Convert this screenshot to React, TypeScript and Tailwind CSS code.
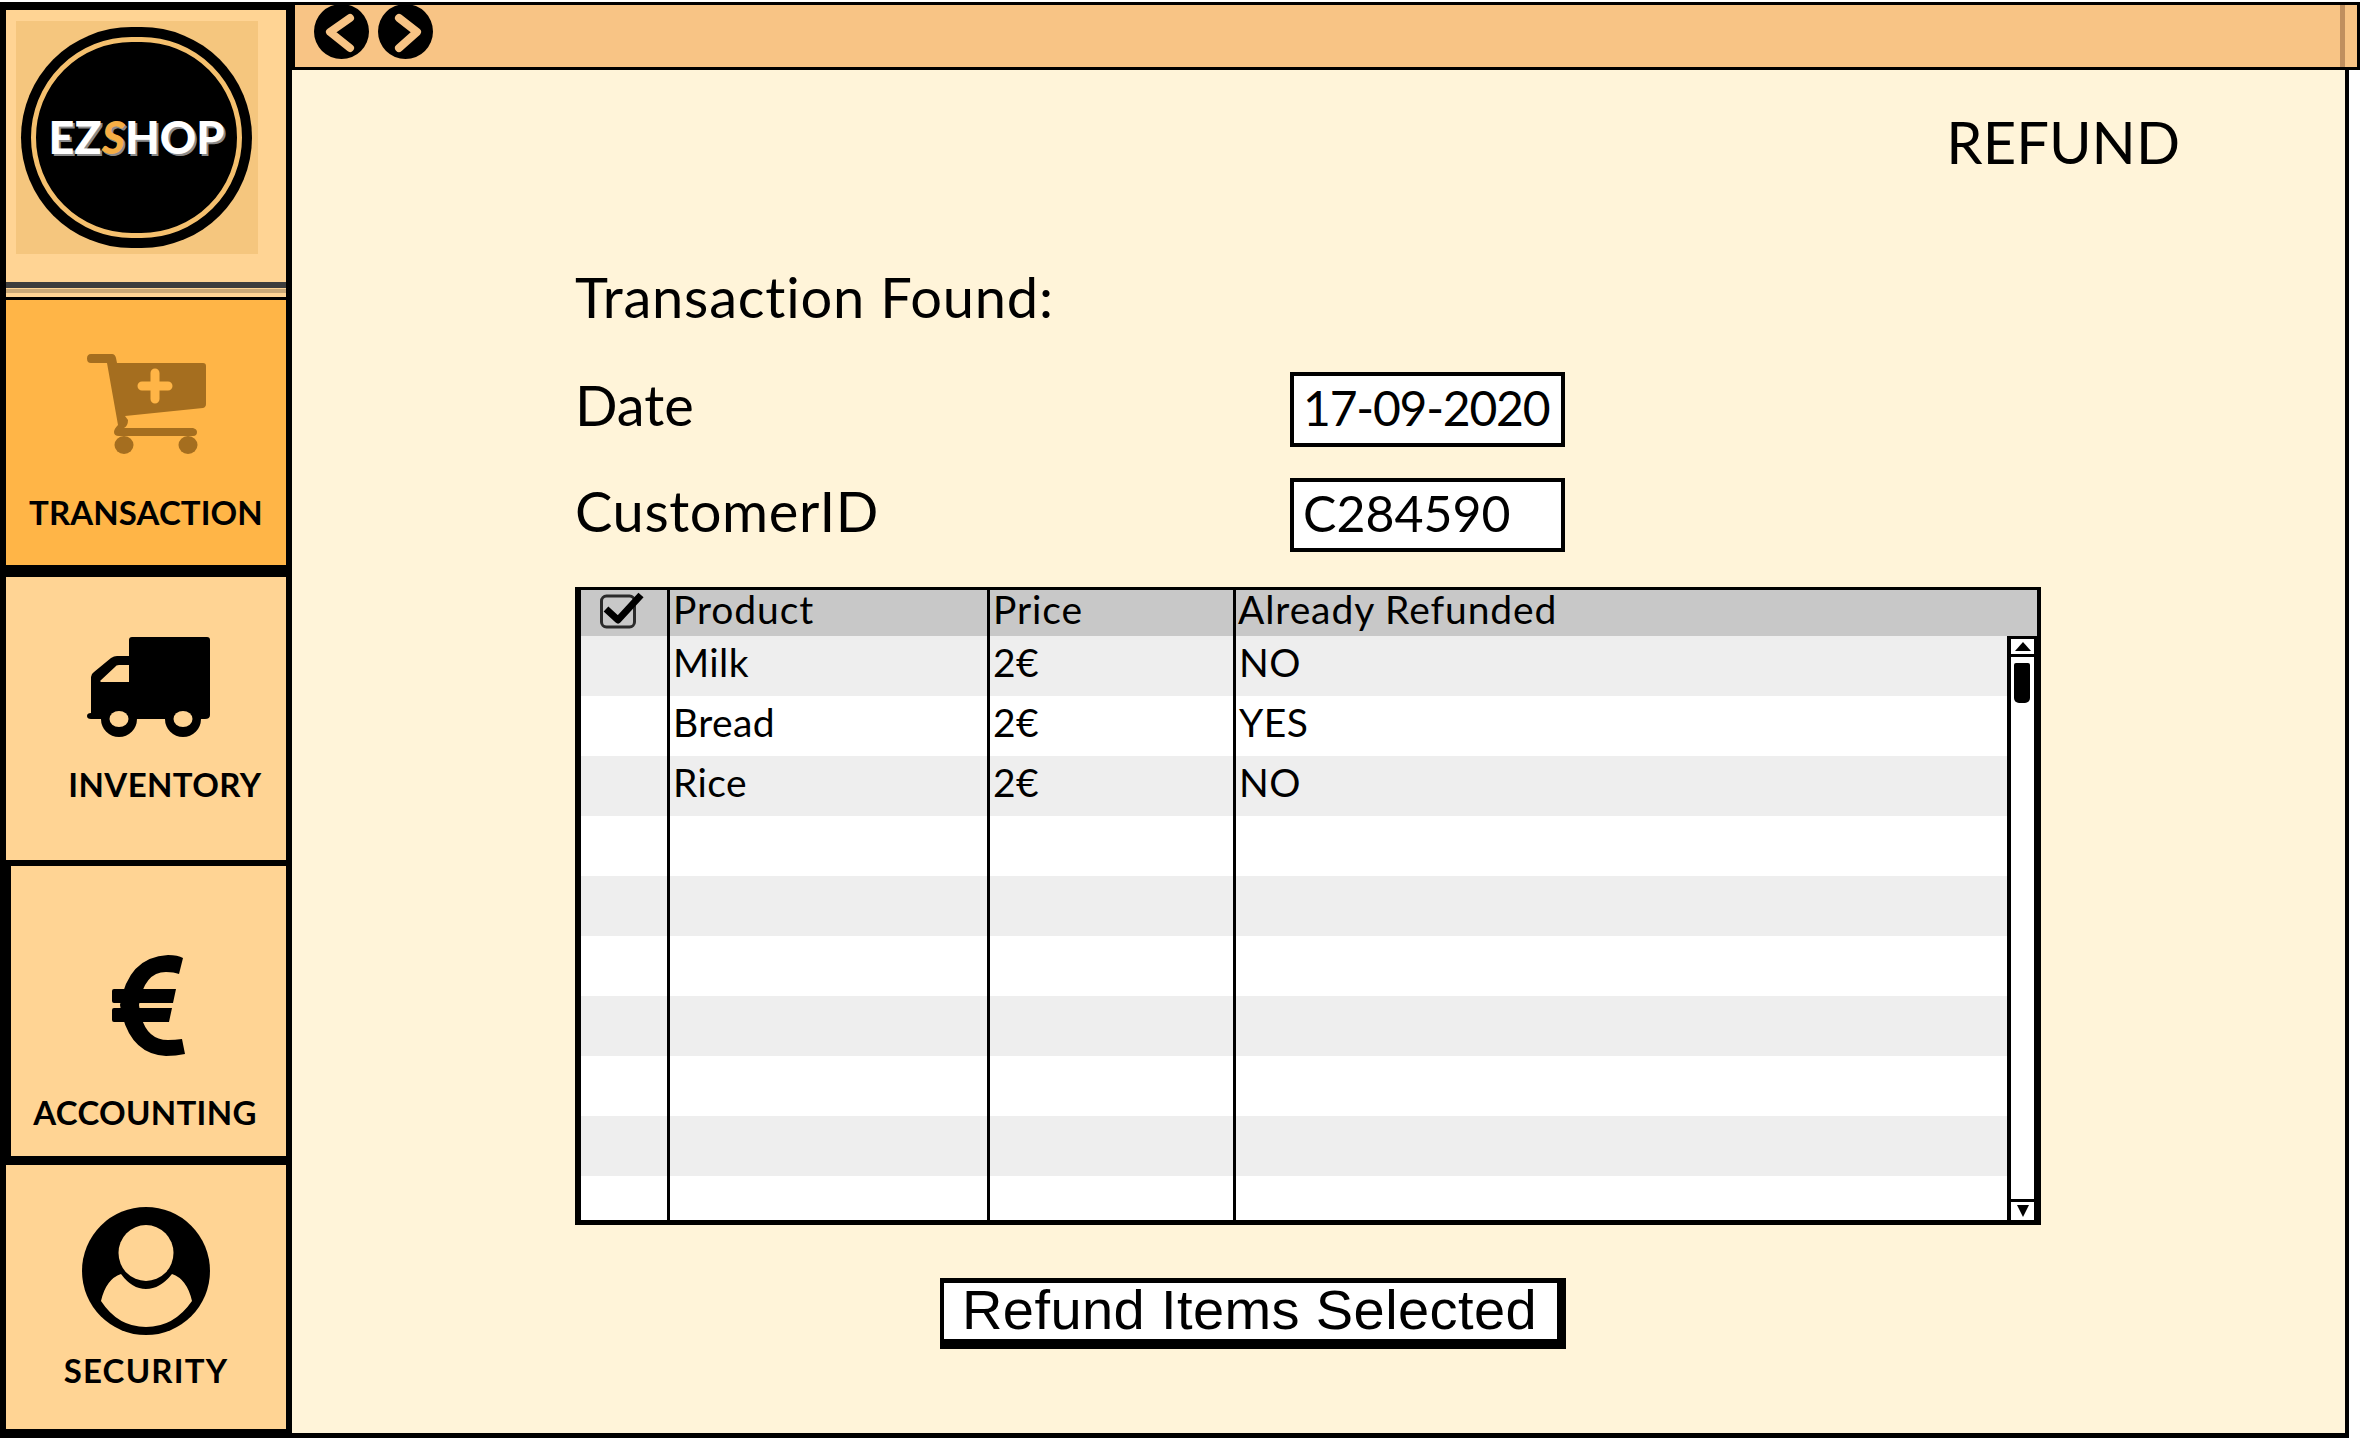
const BODY = "font-['Lato','Noto_Sans',sans-serif]";

const ROWS = [
  { product: 'Milk', price: '2€', refunded: 'NO' },
  { product: 'Bread', price: '2€', refunded: 'YES' },
  { product: 'Rice', price: '2€', refunded: 'NO' },
  { product: '', price: '', refunded: '' },
  { product: '', price: '', refunded: '' },
  { product: '', price: '', refunded: '' },
  { product: '', price: '', refunded: '' },
  { product: '', price: '', refunded: '' },
  { product: '', price: '', refunded: '' },
];

function CartIcon() {
  return (
    <svg width="119" height="101" viewBox="0 0 119 101" fill="#a56e1f">
      <path d="M4 0H25Q28 0 29 4L30 9H116Q119 9 119 12V50Q119 53 116 54L38 62L41 66Q41 72 37 74H106Q110 75 110 78Q110 82 106 82H32Q27 82 27 78Q27 75 31 71L20 9H4Q0 9 0 4.500Q0 0 4 0Z" />
      <ellipse cx="37" cy="91" rx="9.500" ry="9" />
      <ellipse cx="101" cy="91" rx="9.500" ry="9" />
      <path d="M55 32H81M68 19V45" stroke="#ffb547" strokeWidth="9" strokeLinecap="round" />
    </svg>
  );
}

function TruckIcon() {
  return (
    <svg width="123" height="100" viewBox="0 0 123 100" fill="#000">
      <path d="M42 3Q42 0 45 0H120Q123 0 123 3V78Q123 82 118 82H4Q0 82 0 79Q0 76 4 76V40Q4 37 7 35L24 21Q27 19 30 19H42Z" />
      <path d="M13 44L28 30Q29 28 32 28H42V45H14Z" fill="#ffd494" />
      <circle cx="32" cy="82" r="18" />
      <circle cx="96" cy="82" r="18" />
      <ellipse cx="32" cy="82" rx="9.500" ry="8" fill="#ffd494" />
      <ellipse cx="96" cy="82" rx="9.500" ry="8" fill="#ffd494" />
    </svg>
  );
}

function EuroIcon() {
  return (
    <svg width="73" height="101" viewBox="0 0 73 101" fill="#000">
      <path d="M71 3L67 19Q62 17 54 17Q32 17 27 50Q31 85 56 85Q63 85 70 84L73 99Q64 101 54 101Q16 99 8 50Q16 2 56 0Q66 0 71 3Z" />
      <path d="M2 34H64L61 48H2Q0 48 0 46V36Q0 34 2 34ZM2 53H60L57 67H2Q0 67 0 65V55Q0 53 2 53Z" />
    </svg>
  );
}

function PersonIcon() {
  return (
    <svg width="128" height="128" viewBox="0 0 128 128">
      <circle cx="64" cy="64" r="64" fill="#000" />
      <ellipse cx="64" cy="46" rx="27.500" ry="28" fill="#ffd494" />
      <path d="M19 94Q24 72 39 67Q50 82 64 82Q78 82 90 67Q105 72 110 94Q92 120 64 120Q36 120 19 94Z" fill="#ffd494" />
    </svg>
  );
}

function NavCircle({ points }: { points: string }) {
  return (
    <svg width="55" height="55" viewBox="0 0 55 55">
      <circle cx="27.500" cy="27.500" r="27.500" fill="#000" />
      <polyline points={points} fill="none" stroke="#f8c485" strokeWidth="8" strokeLinecap="round" strokeLinejoin="round" />
    </svg>
  );
}

function NavLabel({ children, className }: { children: string; className: string }) {
  return (
    <div className={`text-[33px] leading-[34px] font-bold text-black whitespace-nowrap ${BODY} ${className}`}>
      {children}
    </div>
  );
}

export default function App() {
  return (
    <div className={`flex w-[2360px] h-[1438px] overflow-hidden bg-white text-black ${BODY}`}>
      {/* Sidebar */}
      <aside className="flex flex-col w-[292px] h-[1436px] mt-[2px] bg-black pl-[6px] pr-[6px] pt-[8px]">
        <div className="h-[270px] bg-[#ffd494] pl-[10px] pt-[11px]">
          <div className="w-[242px] h-[233px] bg-[#f5c67e] pl-[5px] pt-[6px]">
            <div className="w-[231px] h-[221px] rounded-full bg-black p-[10px]">
              <div className="flex items-center justify-center w-full h-full rounded-full bg-black border-[5px] border-[#f5c06e]">
                <span className="text-[45px] leading-none font-black text-white [text-shadow:2px_2px_0_#8a8a8a]">
                  EZ<span className="italic text-[#f5ae45]">S</span>HOP
                </span>
              </div>
            </div>
          </div>
        </div>
        <div className="flex flex-col h-[17px] bg-[#ffd494] pt-[2px]">
          <div className="h-[6px] bg-[#3d3d3d]" />
          <div className="h-[4px] mt-[1px] bg-[#c9a877]" />
        </div>
        <div className="h-[3px] bg-black" />

        <div className="flex flex-col items-center h-[265px] bg-[#ffb547] pt-[54px]">
          <CartIcon />
          <NavLabel className="mt-[40px] tracking-[0.1px]">TRANSACTION</NavLabel>
        </div>

        <div className="flex flex-col items-center h-[283px] mt-[12px] bg-[#ffd494] pt-[60px]">
          <div className="ml-[4px]">
            <TruckIcon />
          </div>
          <NavLabel className="mt-[30px] ml-[38px] tracking-[0.4px]">INVENTORY</NavLabel>
        </div>

        <div className="flex flex-col items-center h-[290px] ml-[5px] mt-[6px] bg-[#ffd494] pt-[89px]">
          <EuroIcon />
          <NavLabel className="mt-[39px] -ml-[7px] tracking-[0.3px]">ACCOUNTING</NavLabel>
        </div>

        <div className="flex flex-col items-center h-[264px] mt-[9px] bg-[#ffd494] pt-[42px]">
          <PersonIcon />
          <NavLabel className="mt-[18px] tracking-[1.2px]">SECURITY</NavLabel>
        </div>
      </aside>

      {/* Main window */}
      <main className="flex flex-col w-[2068px] h-[1438px]">
        <div className="flex items-start w-[2068px] h-[68px] mt-[2px] bg-[#f8c485] border-[3px] border-black pl-[19px]">
          <div className="flex gap-[9px] -mt-[1px]">
            <NavCircle points="36,14 16,28 36,44" />
            <NavCircle points="21,14 39,28 21,44" />
          </div>
          <div className="self-stretch w-[5px] ml-[1907px] bg-[#c08f5e]" />
        </div>

        <div className="flex flex-col w-[2057px] h-[1368px] bg-[#fff4d9] border-r-[4px] border-b-[5px] border-black pl-[283px]">
          <div className="mt-[42px] mr-[165px] self-end text-[58px] leading-[60px]">REFUND</div>

          <div className="mt-[95px] text-[56px] leading-[60px] tracking-[0.8px]">Transaction Found:</div>

          <div className="flex items-center h-[75px] mt-[45px]">
            <div className="w-[715px] text-[56px] leading-[60px] pb-[10px]">Date</div>
            <div className="flex items-center w-[275px] h-[75px] bg-white border-[4px] border-black pl-[9px] pb-[4px] text-[48px] leading-none tracking-[-1.2px] whitespace-nowrap">
              17-09-2020
            </div>
          </div>

          <div className="flex items-center h-[74px] mt-[31px]">
            <div className="w-[715px] text-[56px] leading-[60px] pb-[8px] tracking-[0.6px]">CustomerID</div>
            <div className="flex items-center w-[275px] h-[74px] bg-white border-[4px] border-black pl-[9px] pb-[4px] text-[50px] leading-none">
              C284590
            </div>
          </div>

          {/* Table */}
          <div className="relative w-[1466px] h-[638px] mt-[35px] bg-white border-t-[3px] border-l-[6px] border-r-[4px] border-b-[5px] border-black text-[39px] leading-[44px] tracking-[0.4px]">
            <div className="grid grid-cols-[89px_320px_246px_1fr] h-[46px] bg-[#c8c8c8] tracking-[0.9px]">
              <div className="pl-[19px] pt-[2px] border-r-[3px] border-black">
                <svg width="46" height="37" viewBox="0 0 46 37" fill="none">
                  <rect x="1.500" y="4" width="33" height="31" rx="5" stroke="#2b2b2b" strokeWidth="3" />
                  <path d="M6 17L18 28L41 3" stroke="#000" strokeWidth="7" strokeLinejoin="round" />
                </svg>
              </div>
              <div className="pl-[3px] -mt-[3px] border-r-[3px] border-black">Product</div>
              <div className="pl-[3px] -mt-[3px] border-r-[3px] border-black">Price</div>
              <div className="pl-[2px] -mt-[3px]">Already Refunded</div>
            </div>
            {ROWS.map((row, i) => (
              <div
                key={i}
                className={`grid grid-cols-[89px_320px_246px_1fr] h-[60px] ${i % 2 === 0 ? 'bg-[#eeeeee]' : 'bg-white'}`}
              >
                <div className="border-r-[3px] border-black" />
                <div className="pl-[3px] pt-[4px] border-r-[3px] border-black">{row.product}</div>
                <div className="pl-[3px] pt-[4px] border-r-[3px] border-black">{row.price}</div>
                <div className="pl-[3px] pt-[4px]">{row.refunded}</div>
              </div>
            ))}
            <div className="grid grid-cols-[89px_320px_246px_1fr] h-[44px] bg-white">
              <div className="border-r-[3px] border-black" />
              <div className="border-r-[3px] border-black" />
              <div className="border-r-[3px] border-black" />
              <div />
            </div>

            {/* Scrollbar sits over the table rows */}
            <div className="absolute top-[46px] right-0 bottom-0 flex flex-col w-[30px] bg-white border-l-[4px] border-r-[3px] border-black">
              <div className="flex items-center justify-center h-[21px] border-t-[3px] border-b-[3px] border-black">
                <div className="w-0 h-0 border-x-[8px] border-x-transparent border-b-[9px] border-b-black" />
              </div>
              <div className="w-[16px] h-[40px] mt-[6px] ml-[3px] rounded-b-[5px] rounded-t-[2px] bg-black" />
              <div className="flex items-center justify-center h-[21px] mt-auto border-t-[3px] border-black">
                <div className="w-0 h-0 border-x-[6px] border-x-transparent border-t-[12px] border-t-black" />
              </div>
            </div>
          </div>

          <div className="flex items-center justify-center w-[626px] h-[71px] ml-[365px] mt-[53px] bg-white border-t-[5px] border-l-[4px] border-r-[9px] border-b-[10px] border-black pr-[2px] pb-[2px] font-['Liberation_Sans',sans-serif] text-[56px] leading-none tracking-[0.4px]">
            Refund Items Selected
          </div>
        </div>
      </main>
    </div>
  );
}
